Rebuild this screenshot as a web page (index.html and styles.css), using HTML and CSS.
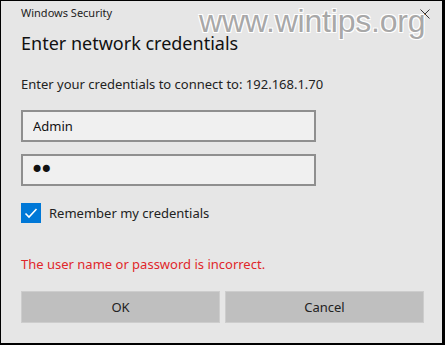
FILE: index.html
```html
<!DOCTYPE html>
<html lang="en">
<head>
  <meta charset="UTF-8" />
  <title>Windows Security</title>
  <link rel="stylesheet" href="styles.css">
</head>
<body>
  <div class="dialog">
    <div class="caption">Windows Security</div>
    <button class="close-btn" aria-label="Close">
      <svg width="10" height="10" viewBox="0 0 10 10"><path d="M0.5 0.5 L9.5 9.5 M9.5 0.5 L0.5 9.5" stroke="#333" stroke-width="1" fill="none"/></svg>
    </button>
    <div class="watermark">www.wintips.org</div>

    <h1 class="heading">Enter network credentials</h1>
    <p class="prompt">Enter your credentials to connect to: 192.168.1.70</p>

    <div class="fields">
      <input class="field" type="text" value="Admin" />
      <input class="field secret" type="password" value="ab" />
    </div>

    <label class="remember">
      <span class="checkbox">
        <svg width="20" height="20" viewBox="0 0 20 20"><path d="M4.5 10.5 L8 14 L15.5 6" stroke="#fff" stroke-width="1.6" fill="none"/></svg>
      </span>
      Remember my credentials
    </label>

    <p class="error">The user name or password is incorrect.</p>

    <div class="buttons">
      <button class="btn">OK</button>
      <button class="btn">Cancel</button>
    </div>
  </div>
</body>
</html>
```

FILE: styles.css
```css
body {
  margin: 0;
  font-family: "Noto Sans", "Open Sans", sans-serif;
  color: #1a1a1a;
}
.dialog {
  position: relative;
  box-sizing: border-box;
  width: 445px;
  height: 345px;
  background-color: #e6e6e6;
  border-style: solid;
  border-color: #000;
  border-width: 1px 3px 2px 1px;
  padding: 0 18px 0 20px;
  display: flex;
  flex-direction: column;
}
.caption {
  font-size: 11px;
  line-height: 16px;
  margin-top: 4px;
  color: #222;
}
.close-btn {
  position: absolute;
  top: 8px;
  right: 12px;
  padding: 0;
  border: none;
  background: none;
  line-height: 0;
}
.watermark {
  position: absolute;
  top: 2px;
  left: 198px;
  font-family: "Liberation Sans", Arial, sans-serif;
  font-size: 32px;
  color: #a8a8a8;
  letter-spacing: -0.2px;
  text-shadow: 1px 1px 0 #fff, -1px -1px 0 #fff, 1px -1px 0 #fff, -1px 1px 0 #fff;
}
.heading {
  font-size: 18px;
  font-weight: normal;
  line-height: 26px;
  margin: 9px 0 0;
  color: #111;
}
.prompt {
  font-size: 13px;
  line-height: 20px;
  margin: 18px 0 0;
  color: #222;
}
.fields {
  display: flex;
  flex-direction: column;
  gap: 12px;
  margin-top: 16px;
}
.field {
  box-sizing: border-box;
  width: 295px;
  height: 32px;
  margin: 0;
  padding: 0 10px;
  font-family: inherit;
  font-size: 13px;
  color: #111;
  background-color: #f0f0f0;
  border: 2px solid #8f8f8f;
  outline: none;
}
.secret {
  font-family: "DejaVu Sans", sans-serif;
  font-size: 24px;
  letter-spacing: -5px;
  padding-left: 7px;
}
.remember {
  display: flex;
  align-items: center;
  gap: 8px;
  margin-top: 17px;
  font-size: 13px;
  color: #222;
}
.checkbox {
  width: 20px;
  height: 20px;
  background-color: #0078d7;
  line-height: 0;
}
.error {
  font-size: 13px;
  line-height: 20px;
  margin: 31px 0 0;
  color: #e0262b;
}
.buttons {
  display: flex;
  gap: 5px;
  margin-top: 17px;
}
.btn {
  flex: 1;
  height: 32px;
  font-family: inherit;
  font-size: 13px;
  color: #222;
  background-color: #bfbfbf;
  border: 1px solid #cdcdcd;
  padding: 0;
}
```
